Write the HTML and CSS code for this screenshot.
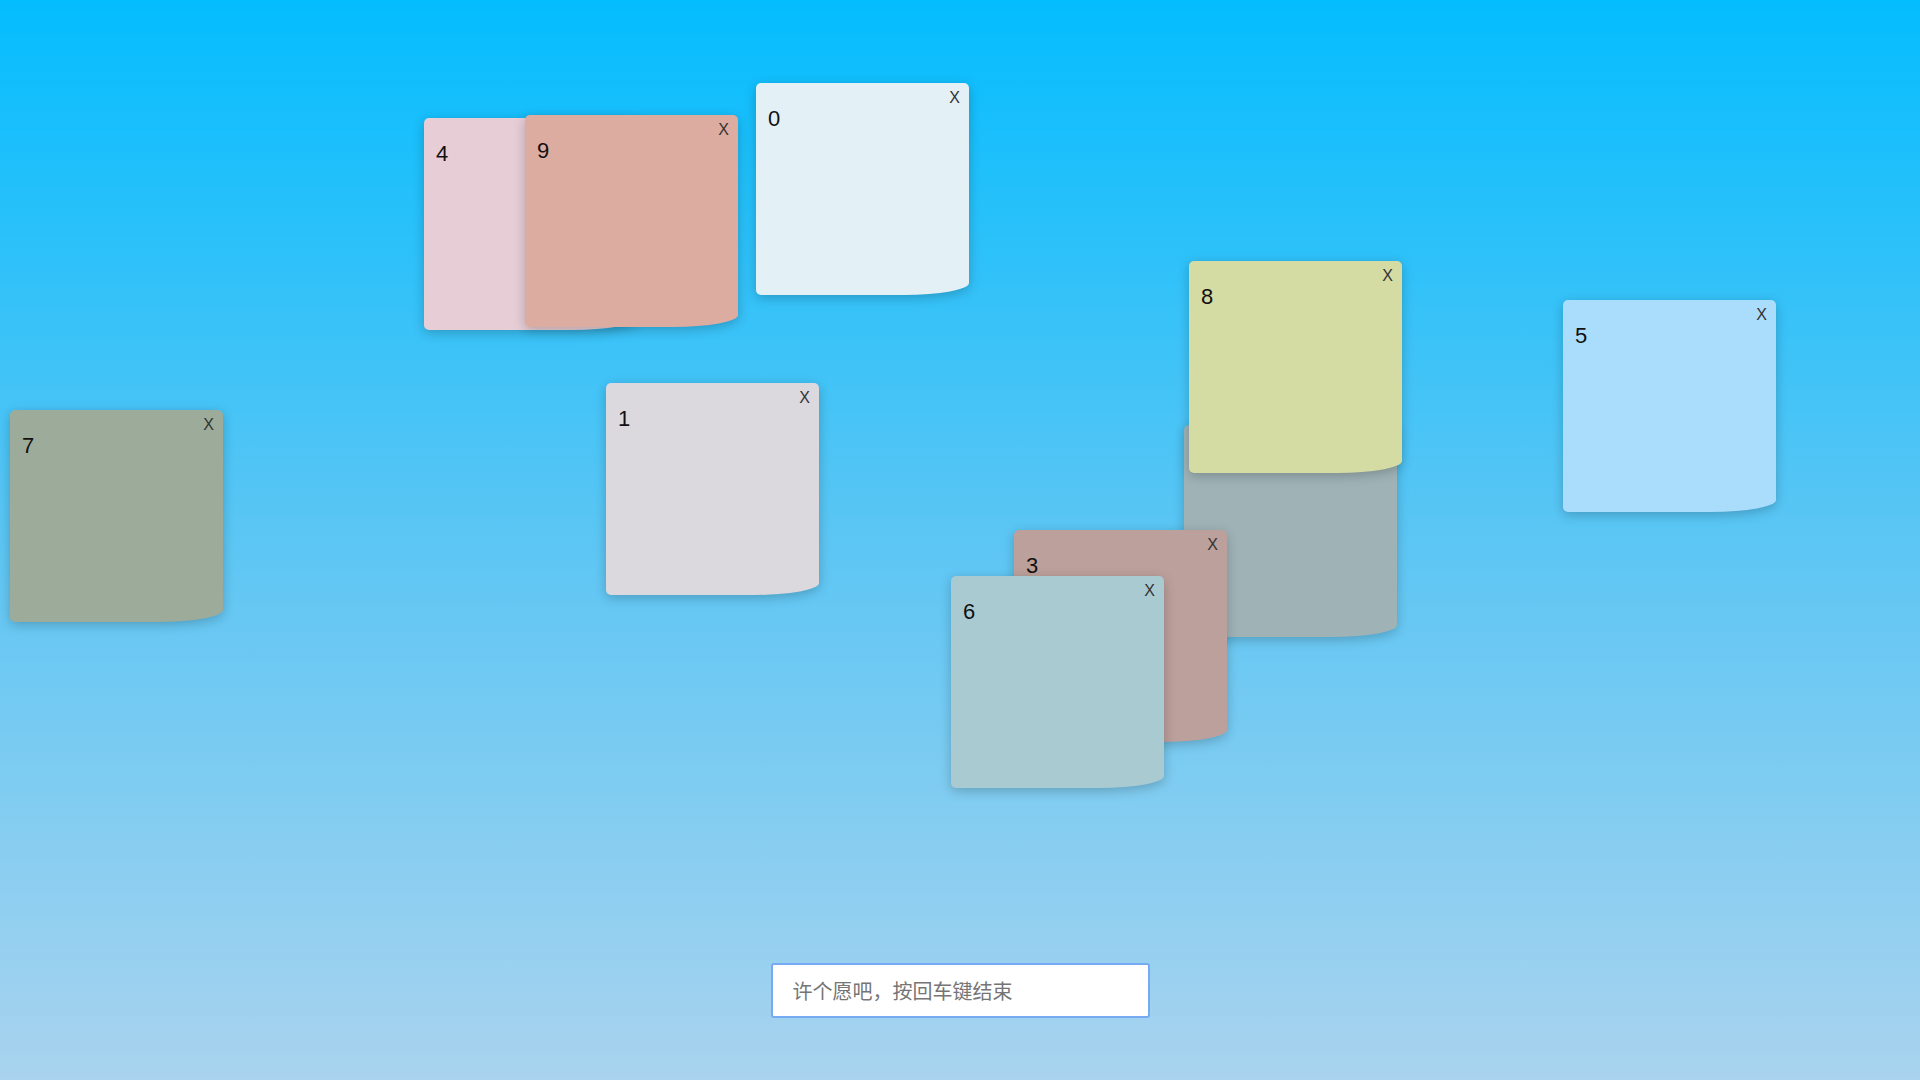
FILE: index.html
```html
<!DOCTYPE html>
<html lang="zh">
<head>
<meta charset="utf-8">
<title>许愿墙</title>
<link rel="stylesheet" href="styles.css">
</head>
<body>
<div class="wall">
  <div class="note c4" style="left:424px;top:118px"><span class="close">X</span><div class="txt">4</div></div>
  <div class="note c9" style="left:525px;top:115px"><span class="close">X</span><div class="txt">9</div></div>
  <div class="note c0" style="left:756px;top:83px"><span class="close">X</span><div class="txt">0</div></div>
  <div class="note c2" style="left:1184px;top:425px"><span class="close">X</span><div class="txt">2</div></div>
  <div class="note c8" style="left:1189px;top:261px"><span class="close">X</span><div class="txt">8</div></div>
  <div class="note c5" style="left:1563px;top:300px"><span class="close">X</span><div class="txt">5</div></div>
  <div class="note c7" style="left:10px;top:410px"><span class="close">X</span><div class="txt">7</div></div>
  <div class="note c1" style="left:606px;top:383px"><span class="close">X</span><div class="txt">1</div></div>
  <div class="note c3" style="left:1014px;top:530px"><span class="close">X</span><div class="txt">3</div></div>
  <div class="note c6" style="left:951px;top:576px"><span class="close">X</span><div class="txt">6</div></div>
</div>
<div class="bar">
  <input class="wish" type="text" placeholder="许个愿吧，按回车键结束">
</div>
</body>
</html>
```
FILE: styles.css
```css
html, body {
  margin: 0;
  padding: 0;
  width: 1920px;
  height: 1080px;
  overflow: hidden;
}
body {
  background: linear-gradient(to bottom, #04bdfe 0%, #5cc6f4 50%, #a9d3ee 100%);
  font-family: "Liberation Sans", Arial, sans-serif;
  display: flex;
  flex-direction: column;
  justify-content: flex-end;
  align-items: center;
  position: relative;
}
.wall {
  position: absolute;
  inset: 0;
}
.note {
  position: absolute;
  width: 213px;
  height: 212px;
  box-sizing: border-box;
  padding: 23px 12px;
  border-radius: 5px 5px 65px 5px / 5px 5px 12px 5px;
  box-shadow: 0 3px 12px rgba(0, 0, 0, 0.22);
}
.txt {
  font-size: 22px;
  line-height: 1.2;
  color: #111;
}
.close {
  position: absolute;
  top: 7px;
  right: 9px;
  font-size: 16px;
  line-height: 16px;
  color: #333;
  cursor: pointer;
}
.c0 { background: #e3f0f6; }
.c1 { background: #dbd8de; }
.c2 { background: #9fb3b6; }
.c3 { background: #bca09b; }
.c4 { background: #e6cdd6; }
.c5 { background: #aadcfc; }
.c6 { background: #a9cad1; }
.c7 { background: #9dac9a; }
.c8 { background: #d4dca4; }
.c9 { background: #dcaca0; }
.bar {
  margin-bottom: 62px;
  position: relative;
  z-index: 2;
}
.wish {
  width: 379px;
  height: 55px;
  box-sizing: border-box;
  border: 2px solid #76aaf3;
  border-radius: 3px;
  padding: 0 20px;
  font-family: "Noto Sans CJK SC", "Liberation Sans", sans-serif;
  font-size: 20px;
  color: #333;
  background: #fff;
  outline: none;
}
.wish::placeholder {
  color: #757575;
}
```
